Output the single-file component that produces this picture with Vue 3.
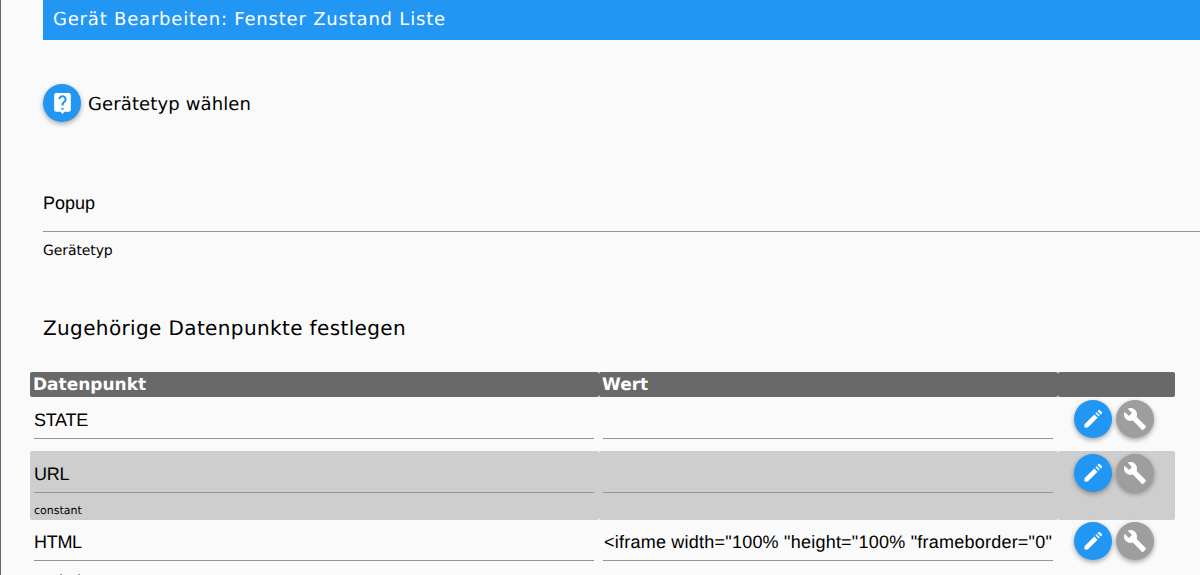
<script setup>
const rows = [
  { name: 'STATE', value: '', sub: '', alt: false },
  { name: 'URL', value: '', sub: 'constant', alt: true },
  { name: 'HTML', value: '<iframe width="100% "height="100% "frameborder="0"', sub: 'constant', alt: false }
]
</script>

<template>
  <div class="page">
    <header class="title">Gerät Bearbeiten: Fenster Zustand Liste</header>
    <div class="type-row">
      <button class="fab blue big" aria-label="Gerätetyp wählen">
        <svg viewBox="0 0 24 24"><path fill="#fff" d="M18 2H6a2 2 0 0 0-2 2v14a2 2 0 0 0 2 2h4l2 2 2-2h4a2 2 0 0 0 2-2V4a2 2 0 0 0-2-2zm-5 16h-2v-2h2v2zm2.07-7.75-.9.92C13.45 11.9 13 12.5 13 14h-2v-.5c0-1.1.45-2.1 1.17-2.83l1.24-1.26c.37-.36.59-.86.59-1.41 0-1.1-.9-2-2-2s-2 .9-2 2H8c0-2.21 1.79-4 4-4s4 1.79 4 4c0 .88-.36 1.68-.93 2.25z"/></svg>
      </button>
      <span class="type-label">Gerätetyp wählen</span>
    </div>
    <div class="field">
      <div class="field-value">Popup</div>
      <div class="field-label">Gerätetyp</div>
    </div>
    <h2 class="section">Zugehörige Datenpunkte festlegen</h2>
    <div class="table">
      <div class="head">
        <div class="th">Datenpunkt</div>
        <div class="th">Wert</div>
        <div class="th"></div>
      </div>
      <div v-for="r in rows" :key="r.name" class="row" :class="{ alt: r.alt, plain: !r.sub }">
        <div class="cell">
          <div class="input name">{{ r.name }}</div>
          <div class="sub">{{ r.sub }}</div>
        </div>
        <div class="cell">
          <div class="input value">{{ r.value }}</div>
        </div>
        <div class="actions">
          <button class="fab blue" aria-label="Bearbeiten">
            <svg viewBox="0 0 24 24"><path fill="#fff" d="M3.5 17.2v3.3h3.3L16.6 10.7l-3.3-3.3zM14.4 6.3l3.3 3.3 1.1-1.1-3.3-3.3zM16.5 4.2l3.3 3.3 1-1a1 1 0 0 0 0-1.4l-1.9-1.9a1 1 0 0 0-1.4 0z"/></svg>
          </button>
          <button class="fab gray" aria-label="Einstellungen">
            <svg viewBox="0 0 24 24"><path fill="#fff" d="M22.7 19l-9.1-9.1c.9-2.3.4-5-1.5-6.9-2-2-5-2.4-7.4-1.3L9 6 6 9 1.6 4.7C.4 7.1.9 10.1 2.9 12.1c1.9 1.9 4.6 2.4 6.9 1.5l9.1 9.1c.4.4 1 .4 1.4 0l2.3-2.3c.5-.4.5-1.1.1-1.4z"/></svg>
          </button>
        </div>
      </div>
    </div>
  </div>
</template>

<style>
html, body { margin: 0; background: #fafafa; overflow: hidden; }
</style>

<style scoped>
.page {
  height: 575px;
  overflow: hidden;
  box-sizing: border-box;
  border-left: 1px solid #666;
  background: #fafafa;
  color: #000;
  font-family: "DejaVu Sans", sans-serif;
  text-rendering: geometricPrecision;
}
.title {
  margin-left: 42px;
  height: 40px;
  line-height: 40px;
  padding-left: 10px;
  background: #2196f3;
  color: #fff;
  font-size: 18px;
  letter-spacing: 0.8px;
}
.type-row {
  display: flex;
  align-items: center;
  gap: 7px;
  margin: 44px 0 0 42px;
  height: 38px;
}
.type-label { font-size: 18px; letter-spacing: 0.12px; padding-top: 2px; }
.fab {
  width: 38px;
  height: 38px;
  padding: 0;
  border: 0;
  border-radius: 50%;
  display: flex;
  align-items: center;
  justify-content: center;
  flex: none;
  box-shadow: 0 2px 5px rgba(0,0,0,.35);
}
.fab svg { width: 24px; height: 24px; }
.fab.big svg { width: 25px; height: 25px; }
.blue { background: #2196f3; }
.gray { background: #9e9e9e; }
.field { margin: 59px 0 0 42px; }
.field-value {
  height: 50px;
  line-height: 44px;
  border-bottom: 1px solid #949494;
  font-family: "Liberation Sans", sans-serif;
  font-size: 18px;
}
.field-label { margin-top: 10px; font-size: 14px; line-height: 18px; letter-spacing: -0.1px; }
.section {
  margin: 53px 0 0 42px;
  font-size: 20px;
  line-height: 30px;
  font-weight: 400;
  letter-spacing: 0.37px;
}
.table { margin: 29px 0 0 29px; width: 1145px; }
.head, .row {
  display: grid;
  grid-template-columns: 569px 459px 117px;
}
.head { grid-template-rows: 25px; margin-bottom: 1px; }
.th {
  background: #696969;
  color: #fff;
  font-weight: 700;
  font-size: 17px;
  line-height: 23px;
  padding: 2px 0 0 3px;
  height: 25px;
  box-sizing: border-box;
  border-radius: 2px;
}
.row { height: 69px; }
.row.plain { height: 53px; }
.cell { padding: 0 5px 0 4px; min-width: 0; }
.row.alt > * { background: #cecece; border-radius: 2px; padding-top: 1px; }
.input {
  height: 40px;
  line-height: 44px;
  border-bottom: 1px solid #949494;
  font-family: "Liberation Sans", sans-serif;
  font-size: 18px;
  white-space: nowrap;
  overflow: hidden;
}
.name { letter-spacing: -0.3px; }
.value { letter-spacing: 0.23px; text-indent: 1px; }
.sub { font-size: 11px; line-height: 14px; margin-top: 11px; }
.actions { display: flex; gap: 4px; padding: 2px 0 0 16px; }
.row.alt .actions { padding-top: 3px; }
</style>
